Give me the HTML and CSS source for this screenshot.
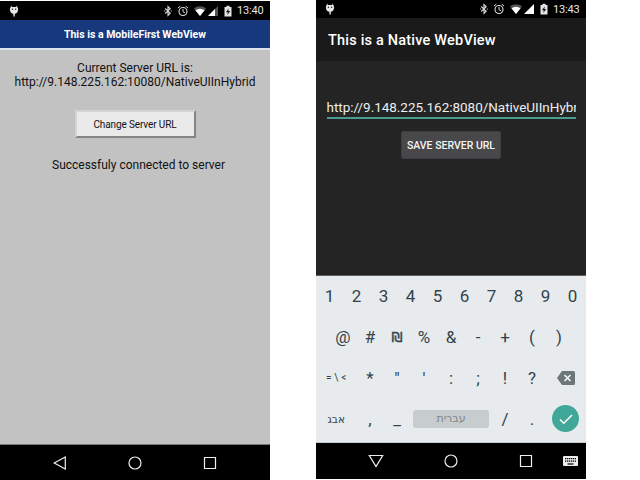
FILE: index.html
```
<!DOCTYPE html>
<html lang="en">
<head>
<meta charset="utf-8">
<title>WebView</title>
<link rel="stylesheet" href="styles.css">
</head>
<body>
<svg class="defs" width="0" height="0">
  <symbol id="droid" viewBox="0 0 10 12"><path d="M2 .5l1 1.400h4L8 .5l.3 1.800C9 3 9.200 4 9 5.300 8.700 7.500 7.500 8.600 5.800 8.800V11.500H4.400V8.800C2.500 8.600 1.300 7.500 1 5.300.8 4 1 3 1.700 2.300z" fill="#e8e8e8"/><circle cx="3.400" cy="4.300" r=".75" fill="#222"/><circle cx="6.600" cy="4.300" r=".75" fill="#222"/></symbol>
  <symbol id="bt" viewBox="0 0 8 12"><path d="M1.200 3.500l5 4.700L4 10.500v-9l2.200 2.300-5 4.700" fill="none" stroke="#ddd" stroke-width="1.100"/><path d="M.2 5.500h1v1h-1zM6.800 5.500h1v1h-1z" fill="#ddd"/></symbol>
  <symbol id="alarm" viewBox="0 0 12 12"><circle cx="6" cy="6.500" r="4" fill="none" stroke="#ddd" stroke-width="1.100"/><path d="M6 4v2.700l1.900 1.100M.9 3.100l2.400-2M11.100 3.100L8.700 1.100" fill="none" stroke="#ddd"/></symbol>
  <symbol id="wifi" viewBox="0 0 12 10"><path d="M0 2.500C3.500-.4 8.500-.4 12 2.500L6 10z" fill="#555"/><path d="M1.400 4.200C4.300 2.200 7.700 2.200 10.600 4.200L6 10z" fill="#fff"/></symbol>
  <symbol id="battery" viewBox="0 0 8 12"><path d="M.5 2h2V.8h3V2h2v9.500h-7z" fill="#e4e4e4"/><path d="M4.800 3.300L1.900 7.200h1.900l-.5 2.800 2.900-4H4.300z" fill="#111"/></symbol>
</svg>
<main class="stage">
  <section class="phone hybrid">
    <div class="status">
      <svg class="droid"><use href="#droid"/></svg>
      <svg class="bt"><use href="#bt"/></svg>
      <svg class="alarm"><use href="#alarm"/></svg>
      <svg class="wifi"><use href="#wifi"/></svg>
      <svg class="signal" viewBox="0 0 10 10"><path d="M10 0v10H0z" fill="#555"/><path d="M7 3V10H0z" fill="#fff"/></svg>
      <svg class="battery"><use href="#battery"/></svg>
      <time>13:40</time>
    </div>
    <header><span>This is a MobileFirst WebView</span></header>
    <div class="page">
      <p class="label">Current Server URL is:</p>
      <p class="url">http://9.148.225.162:10080/NativeUIInHybrid</p>
      <button class="change"><span>Change Server URL</span></button>
      <p class="result">Successfuly connected to server</p>
    </div>
    <nav>
      <svg viewBox="0 0 14 14"><path d="M1.200 7L12.300 1v12z"/></svg>
      <svg viewBox="0 0 14 14"><circle cx="7" cy="7" r="6"/></svg>
      <svg viewBox="0 0 14 14"><path d="M1.500 1.500h11v11h-11z"/></svg>
    </nav>
  </section>
  <section class="phone native">
    <div class="status">
      <svg class="droid"><use href="#droid"/></svg>
      <svg class="bt"><use href="#bt"/></svg>
      <svg class="alarm"><use href="#alarm"/></svg>
      <svg class="wifi"><use href="#wifi"/></svg>
      <svg class="signal" viewBox="0 0 10 10"><path d="M10 0v10H0z" fill="#fff"/></svg>
      <svg class="battery"><use href="#battery"/></svg>
      <time>13:43</time>
    </div>
    <header><span>This is a Native WebView</span></header>
    <div class="page">
      <div class="field"><span>http://9.148.225.162:8080/NativeUIInHybrid</span></div>
      <button class="save"><span>SAVE SERVER URL</span></button>
    </div>
    <div class="keyboard">
      <div class="row"><b>1</b><b>2</b><b>3</b><b>4</b><b>5</b><b>6</b><b>7</b><b>8</b><b>9</b><b>0</b></div>
      <div class="row inset"><b>@</b><b>#</b><b class="shekel">₪</b><b>%</b><b>&amp;</b><b>-</b><b>+</b><b>(</b><b>)</b></div>
      <div class="row"><b class="wide sym">= \ &lt;</b><b>*</b><b>"</b><b>'</b><b>:</b><b>;</b><b>!</b><b>?</b><b class="wide"><svg class="del" viewBox="0 0 18 14"><path d="M5 0h11.500Q18 0 18 1.500v11Q18 14 16.500 14H5L0 7z" fill="#6c777b"/><path d="M7.500 4l6 6M13.500 4l-6 6" stroke="#f0f3f4" stroke-width="1.700"/></svg></b></div>
      <div class="row"><b class="wide heb">אבג</b><b>,</b><b>_</b><b class="space"><span>עברית</span></b><b>/</b><b>.</b><b class="wide"><span class="done"><svg viewBox="0 0 14 12"><path d="M1 6.500l3.800 3.800L13 2" fill="none" stroke="#fff" stroke-width="1.500"/></svg></span></b></div>
    </div>
    <nav>
      <svg class="down" viewBox="0 0 16 14"><path d="M1.300 1.500h13.400L8 12.500z"/></svg>
      <svg viewBox="0 0 14 14"><circle cx="7" cy="7" r="6"/></svg>
      <svg viewBox="0 0 14 14"><path d="M1.500 1.500h11v11h-11z"/></svg>
      <svg class="kbd" viewBox="0 0 15 11"><rect width="15" height="10" rx="1" fill="#eee"/><path d="M2 2.700h11M2 5.200h11" stroke="#000" stroke-width="1.300" stroke-dasharray="1.300 .64"/><path d="M4.500 8h6" stroke="#000" stroke-width="1.200"/></svg>
    </nav>
  </section>
</main>
</body>
</html>
```
FILE: styles.css
```
* { box-sizing: border-box; }
body { margin: 0; background: #fff; font-family: Roboto, "Liberation Sans", sans-serif; }
p { margin: 0; }
.defs { display: block; height: 0; }
.stage { display: flex; gap: 46px; width: 640px; height: 480px; overflow: hidden; }
.phone { display: flex; flex-direction: column; width: 270px; white-space: nowrap; }
.hybrid { padding-top: 1px; }
.native { height: 479px; }

.status { display: flex; align-items: center; flex: none; height: 19px; padding: 0 6px 0 9px; background: #000; color: #e4e4e4; }
.native .status { height: 18px; }
.status svg { display: block; flex: none; }
.droid { width: 10px; height: 12px; margin-right: auto; }
.bt { width: 8px; height: 12px; margin-right: 5px; }
.alarm { width: 12px; height: 12px; margin-right: 5px; }
.wifi { width: 12px; height: 10px; margin-right: 2px; }
.signal { width: 10px; height: 10px; margin-right: 6px; }
.battery { width: 8px; height: 12px; margin-right: 5px; }
time { width: 27px; padding-top: 1px; font-size: 11px; line-height: 18px; letter-spacing: -.2px; }

header { flex: none; display: flex; align-items: center; color: #fff; }
.hybrid header { height: 30px; justify-content: center; background: #18387e; border-bottom: 2px solid #dce1ea; font-size: 10.500px; font-weight: 700; }
.native header { height: 43px; padding: 1px 12px 0; background: #1a1a1a; font-size: 14.500px; font-weight: 500; letter-spacing: .2px; }

.page { flex: 1; display: flex; flex-direction: column; align-items: center; }
.hybrid .page { padding-top: 11px; background: #c2c2c2; border-bottom: 1px solid #777; color: #111; font-size: 12px; line-height: 14px; }
.change { width: 121px; height: 28px; margin-top: 21px; padding: 0; background: #eaeaea; border: 2px solid; border-color: #d4d4d4 #858585 #858585 #d4d4d4; font: 10px Roboto, sans-serif; letter-spacing: -.12px; color: #111; }
.result { margin-top: 20px; padding-left: 7px; }
.native .page { padding-top: 34px; background: #242424; border-bottom: 1px solid #625d60; }
.field { width: 249px; height: 24px; padding-top: 2px; border-bottom: 2px solid #4a9c90; overflow: hidden; color: #eee; font-size: 13.500px; line-height: 20px; letter-spacing: -.03px; }
.save { width: 100px; height: 28px; margin-top: 12px; padding: 0; border: 1px solid #3e3e40; border-radius: 2px; background: #48484a; color: #f4f4f4; font: 500 10.500px Roboto, sans-serif; }

.keyboard { flex: none; height: 167px; background: #e7ebee; border-bottom: 1px solid #c5c8ca; color: #32444b; }
.row { display: flex; height: 41px; }
.row b { display: flex; align-items: center; justify-content: center; flex: none; width: 27px; padding-bottom: 2px; font-size: 17px; font-weight: 400; }
.inset { padding: 0 13.500px; }
.row b.wide { width: 40.500px; }
.row b.sym { font-size: 10px; letter-spacing: .2px; }
.row b.shekel { font-family: "DejaVu Sans", sans-serif; font-size: 14px; -webkit-text-stroke: .4px #32444b; }
.row b.heb { font-family: "DejaVu Sans", sans-serif; font-size: 10.500px; }
.row b.space { width: 81px; }
.space span { display: flex; align-items: center; justify-content: center; width: 76px; height: 18px; border-radius: 3px; background: #c7cccf; color: #7d878b; font: 11px "DejaVu Sans", sans-serif; }
.del { width: 18px; height: 14px; }
.done { display: flex; align-items: center; justify-content: center; width: 27px; height: 27px; border-radius: 50%; background: #40a799; }
.done svg { width: 14px; height: 12px; }

nav { position: relative; flex: none; display: flex; align-items: center; justify-content: space-between; height: 35px; padding: 0 53px; background: #000; }
.native nav { height: 36px; }
nav svg { width: 14px; height: 14px; fill: none; stroke: #eee; stroke-width: 1.200; }
nav .down { width: 16px; margin: 0 -1px; }
nav .kbd { position: absolute; right: 8px; top: 13px; width: 15px; height: 11px; stroke: none; }
```
